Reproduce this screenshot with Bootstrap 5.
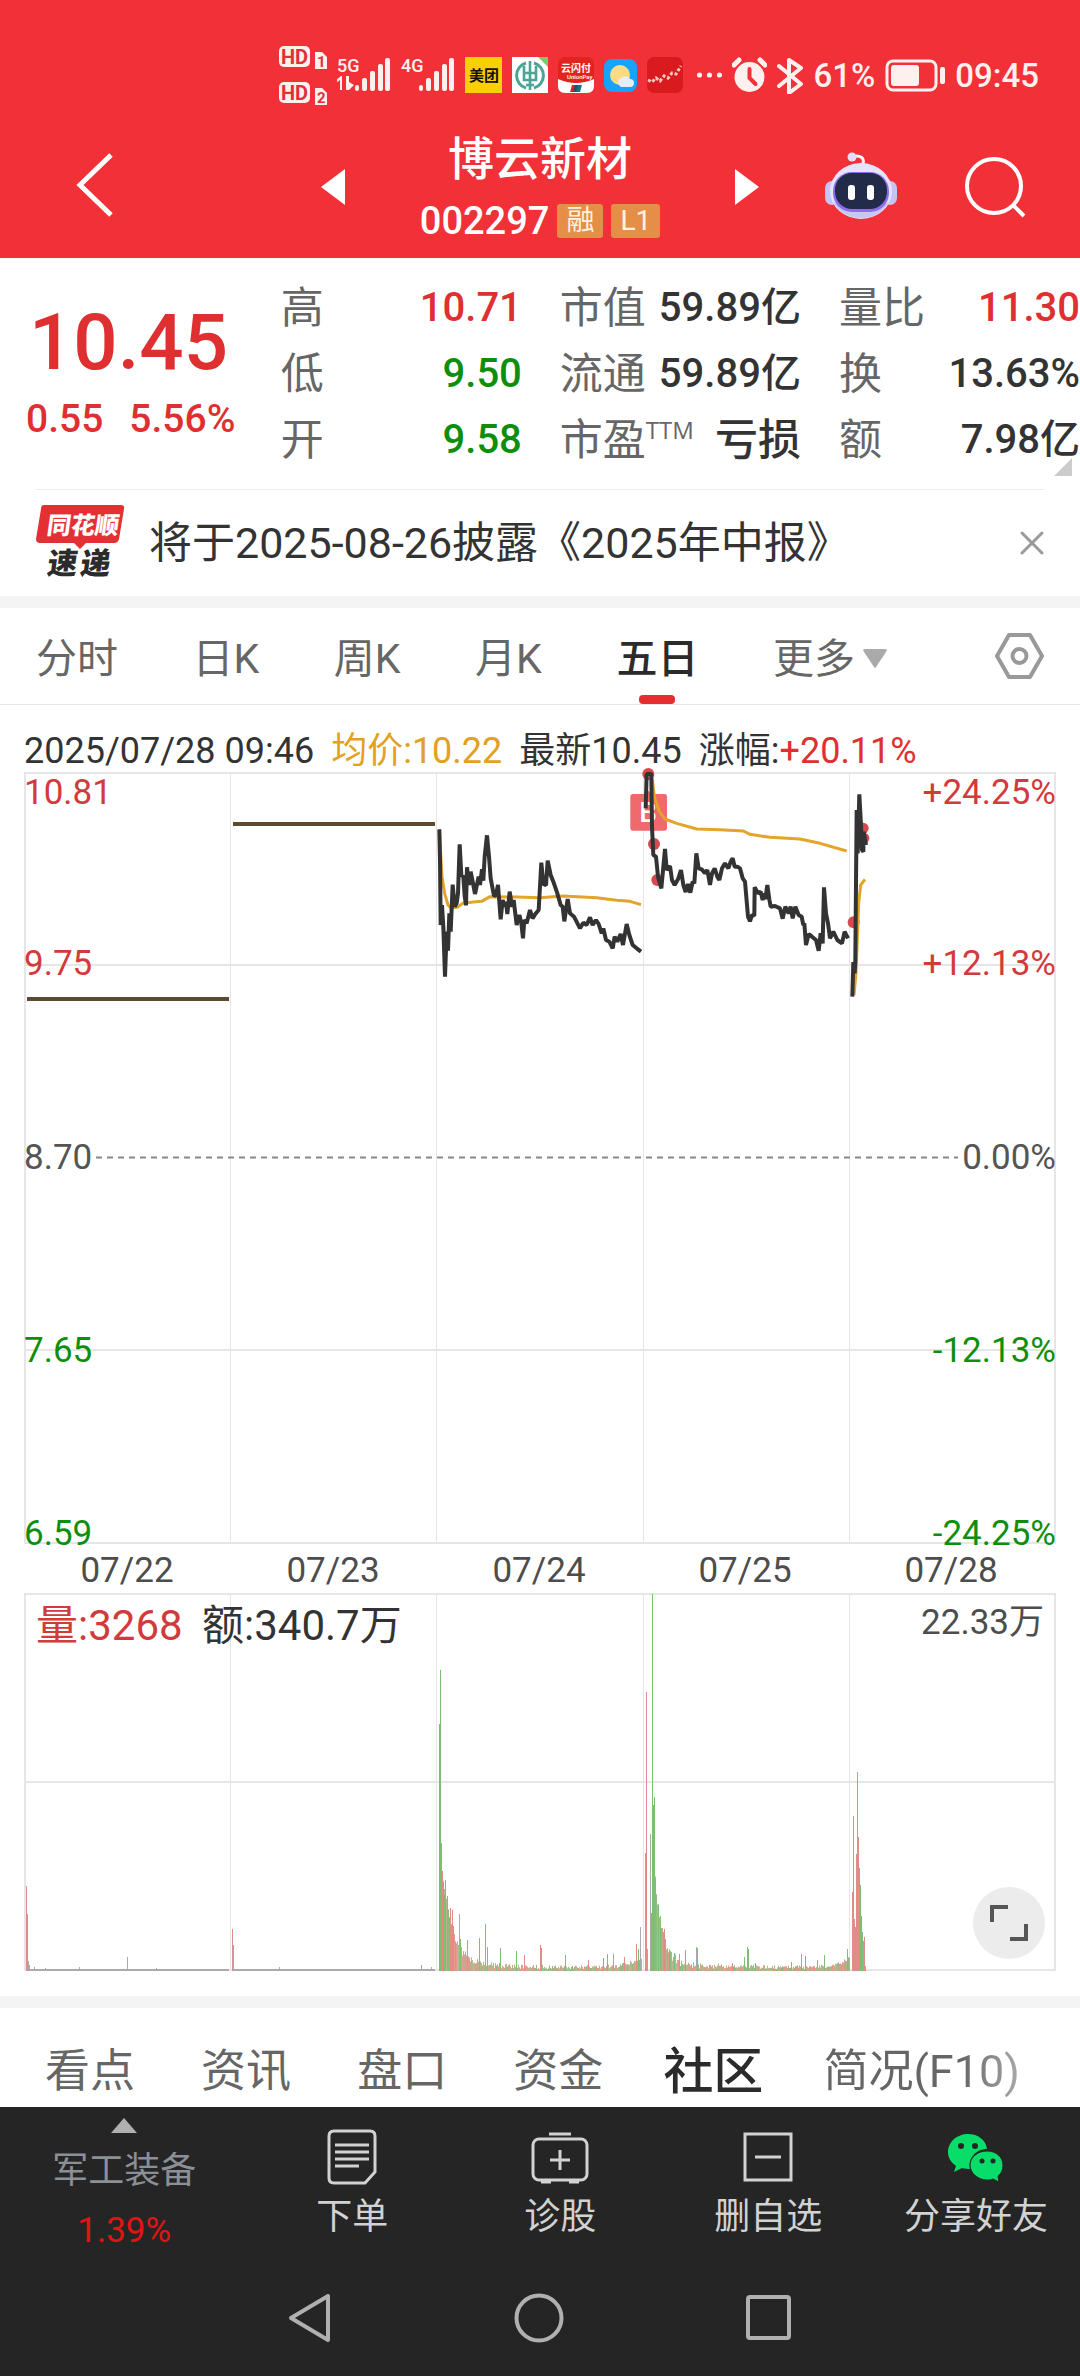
<!DOCTYPE html>
<html lang="zh-CN">
<head>
<meta charset="utf-8">
<meta name="viewport" content="width=device-width, initial-scale=1">
<title>博云新材 002297</title>
<link href="https://cdn.jsdelivr.net/npm/bootstrap@5.3.0/dist/css/bootstrap.min.css" rel="stylesheet">
<style>
  body { font-family: Roboto, "Noto Sans CJK SC", sans-serif; color: #333; background: #fff; }
  a, button { color: inherit; text-decoration: none; }
  button { background: none; border: 0; padding: 0; }
  svg { display: block; flex: none; }
  .up { color: #df3031; }
  .down { color: #0d8f0d; }
  .top-red { background: #f23037; color: #fff; }
  .status-row { height: 116px; padding: 34px 41px 0 0; gap: 10px; font-size: 33px; line-height: 36px; font-weight: 500; color: #fff0f0; }
  .sim-text { font-family: Roboto, sans-serif; font-size: 18px; font-weight: 500; }
  .title-row { height: 142px; padding: 0 54px 0 76px; }
  .stock-name { font-size: 46px; line-height: 60px; font-weight: 500; }
  .stock-code { font-size: 38px; line-height: 48px; font-weight: 500; }
  .tagbox { background: #e58e48; border-radius: 3px; font-size: 28px; line-height: 34px; padding: 0 9px; color: #fff3e0; }
  .title-mid { width: 438px; margin-left: 207px; }
  .quote { height: 231px; padding-top: 17px; }
  .quote-main { width: 26%; padding-left: 26px; }
  .price { font-size: 78px; line-height: 92px; font-weight: 500; padding: 22px 0 3px 3px; }
  .delta { font-size: 39px; line-height: 54px; gap: 26px; font-weight: 500; }
  .quote-cols { gap: 38px; font-size: 43px; line-height: 66px; }
  .quote-cols .lab { color: #666; }
  .quote-cols .val { font-size: 40px; font-weight: 500; white-space: nowrap; }
  .quote-cols .val-text { font-weight: 500; }
  .quote-cols sup { font-size: 24px; top: -16px; font-family: "Open Sans", sans-serif; }
  .corner { position: absolute; right: 8px; bottom: 13px; }
  .notice { height: 107px; margin: 0 36px; border-top: 1px solid #ececec; gap: 24px; font-size: 43px; }
  .band { background: #f4f4f4; height: 12px; }
  .period { height: 97px; padding: 0 36px; border-bottom: 1px solid #e6e6e6; font-size: 41px; color: #666; }
  .period-links { margin-right: 108px; }
  .period-links a { padding-top: 6px; line-height: 90px; position: relative; }
  .period-links .cur { color: #2b2b2b; font-weight: 500; }
  .period-links .cur::after { content: ""; position: absolute; left: 50%; bottom: 0; width: 36px; height: 9px; margin-left: -18px; border-radius: 4px; background: #e62e30; }
  .legend-row { height: 60px; font-size: 36px; line-height: 32px; padding: 30px 24px 0; gap: 17px; }
  .avg { color: #e2a11e; }
  .chart { width: 100%; height: auto; font-size: 35px; }
  .chart .big { font-size: 42px; }
  .vol-wrap { position: relative; }
  .expand { position: absolute; right: 35px; bottom: 37px; width: 72px; height: 72px; border-radius: 50%; background: #ececec; }
  .sections { height: 99px; padding: 28px 60px 0 45px; font-size: 45px; line-height: 68px; color: #666; }
  .sections .cur { font-size: 50px; font-weight: 500; color: #2b2b2b; margin: 0 -6px; }
  .sections .fade-end { background: linear-gradient(90deg, #666 70%, #aaa); -webkit-background-clip: text; background-clip: text; color: transparent; }
  .dark { background: #252525; color: #d2d2d2; }
  .actions { height: 147px; font-size: 36px; line-height: 44px; }
  .sector { flex: none; width: 23%; color: #8a9096; padding-top: 11px; }
  .sector .chg { color: #e01414; line-height: 44px; font-size: 35px; }
  .act { flex: 1 1 0; padding-top: 22px; gap: 10px; }
  .sysnav { height: 122px; padding: 6px 288px 0; }
</style>
<script src="https://cdn.jsdelivr.net/npm/bootstrap@5.3.0/dist/js/bootstrap.bundle.min.js"></script>
</head>
<body>
<header class="top-red">
  <div class="status-row d-flex justify-content-end">
    <svg width="48" height="60" viewBox="0 0 48 60" style="margin-top:12px" font-family="Roboto" font-weight="700">
      <g fill="#fff0f0"><rect width="31" height="21" rx="5"/><path d="M36 6h7l5 5v12H36z"/><rect y="36" width="31" height="21" rx="5"/><path d="M36 42h7l5 5v12H36z"/></g>
      <g fill="#e03038" font-size="20"><text x="2" y="18">HD</text><text x="2" y="54">HD</text><g font-size="15"><text x="38" y="21">1</text><text x="38" y="57">2</text></g></g>
    </svg>
    <svg width="54" height="60" viewBox="0 0 54 60" fill="#fff0f0"><text class="sim-text" x="0" y="38">5G</text>
      <path d="M5 42v14H3V46l-4 3v-3l5-4zM9 42h3v6l5 3-5 5H9z"/><rect x="18" y="51" width="4" height="6" rx="2"/><rect x="25" y="44" width="5" height="13" rx="2"/><rect x="33" y="37" width="5" height="20" rx="2"/><rect x="41" y="30" width="5" height="27" rx="2"/><rect x="48" y="24" width="5" height="33" rx="2"/></svg>
    <svg width="54" height="60" viewBox="0 0 54 60" fill="#fff0f0"><text class="sim-text" x="0" y="38">4G</text>
      <rect x="18" y="51" width="4" height="6" rx="2"/><rect x="25" y="44" width="5" height="13" rx="2"/><rect x="33" y="37" width="5" height="20" rx="2"/><rect x="41" y="30" width="5" height="27" rx="2"/><rect x="48" y="24" width="5" height="33" rx="2"/></svg>
    <svg width="37" height="60" viewBox="0 0 37 60"><rect y="23" width="37" height="36" fill="#fcd000"/><text x="4" y="47" font-size="15" font-weight="700" fill="#111">美团</text></svg>
    <svg width="36" height="60" viewBox="0 0 36 60"><rect y="23" width="36" height="36" fill="#fff"/><path d="M26 23h10v10z" fill="#7cc96a"/><g fill="none" stroke="#4ba596"><path stroke-width="3" d="M14 29a13 13 0 0 0 0 25M22 29a13 13 0 0 1 0 25"/><path stroke-width="2.600" d="M18 27v29M12 32v14h12V32M12 39h12M14 51h8"/></g></svg>
    <svg width="36" height="60" viewBox="0 0 36 60"><rect y="23" width="36" height="36" rx="7" fill="#e3231e"/><path d="M0 45q18 8 36 0v7q0 7-7 7H7q-7 0-7-7z" fill="#fff"/><text x="3" y="38" font-size="10" font-weight="700" fill="#fff">云闪付</text><path d="M14 51h5l-2 7h-5z" fill="#d22"/><path d="M17 51h4l-2 7h-4z" fill="#234a83"/><path d="M20 51h4l-2 7h-4z" fill="#177"/><text x="9" y="45" font-size="6" fill="#fff">UnionPay</text></svg>
    <svg width="33" height="60" viewBox="0 0 33 60"><rect y="25" width="33" height="33" rx="8" fill="#17a2fb"/><circle cx="16" cy="41" r="10" fill="#ffdc84"/><path d="M17 53a5 5 0 0 1 0-9 6 6 0 0 1 9 1 4 4 0 0 1 0 8z" fill="#e8eef8"/></svg>
    <svg width="36" height="60" viewBox="0 0 36 60"><rect y="23" width="36" height="36" rx="7" fill="#d91a1f"/><path d="M1 46l4 2 4-4 4 3 4-5 4 2 4-5 4 1 5-8" fill="none" stroke="#ffc9c0" stroke-width="3" stroke-dasharray="3 2"/></svg>
    <svg class="ms-1" width="25" height="60" viewBox="0 0 25 60" fill="#fff0f0"><circle cx="2.500" cy="41" r="2.600"/><circle cx="12.500" cy="41" r="2.600"/><circle cx="22.500" cy="41" r="2.600"/></svg>
    <svg width="35" height="60" viewBox="0 0 35 60"><circle cx="17.500" cy="43" r="15" fill="#fff0f0"/><path d="M2 31l5-5M33 31l-5-5" stroke="#fff0f0" stroke-width="5" stroke-linecap="round"/><path d="M17.500 35v9l6 6" stroke="#f23037" stroke-width="4" fill="none" stroke-linecap="round"/></svg>
    <svg width="26" height="60" viewBox="0 0 26 60"><path d="M2 32l22 18-12 9V26l12 8L2 52" fill="none" stroke="#fff0f0" stroke-width="4" stroke-linejoin="round" stroke-linecap="round"/></svg>
    <span class="mt-4">61%</span>
    <svg width="60" height="60" viewBox="0 0 60 60"><rect x="2" y="27" width="49" height="29" rx="6" fill="none" stroke="#fff0f0" stroke-width="3"/><rect x="6" y="31" width="28" height="21" rx="3" fill="#fff0f0"/><rect x="55" y="33" width="5" height="17" rx="2" fill="#fff0f0"/></svg>
    <span class="mt-4">09:45</span>
  </div>
  <div class="title-row d-flex align-items-center">
    <button type="button" aria-label="返回"><svg width="38" height="68" viewBox="0 0 38 68" fill="none" stroke="#fff" stroke-width="5"><path d="M35 2L4 32l31 30"/></svg></button>
    <div class="title-mid d-flex align-items-center justify-content-between">
      <button type="button" aria-label="上一只"><svg width="24" height="36" viewBox="0 0 24 36"><path d="M24 0v36L0 18z" fill="#fff"/></svg></button>
      <div class="text-center">
        <div class="stock-name">博云新材</div>
        <div class="d-flex align-items-center justify-content-center gap-2 pt-2"><span class="stock-code">002297</span><span class="tagbox">融</span><span class="tagbox">L1</span></div>
      </div>
      <button type="button" aria-label="下一只"><svg width="24" height="36" viewBox="0 0 24 36"><path d="M0 0v36l24-18z" fill="#fff"/></svg></button>
    </div>
    <div class="d-flex align-items-center ms-auto" style="gap:68px">
      <button type="button" aria-label="智能助手"><svg width="72" height="70" viewBox="0 0 72 70"><path d="M38 12q2-8-7-8" fill="none" stroke="#fff" stroke-width="3"/><circle cx="27" cy="5" r="4.500" fill="#e4defa"/><rect x="0" y="29" width="14" height="24" rx="7" fill="#c5c4f4"/><rect x="58" y="29" width="14" height="24" rx="7" fill="#c5c4f4"/><ellipse cx="36" cy="39" rx="31" ry="28" fill="#e6e4fc"/><path d="M8 50a31 28 0 0 0 56 0q-28 14-56 0z" fill="#c8c7f4"/><rect x="8" y="20" width="56" height="40" rx="19" fill="#8d6cf0"/><rect x="10" y="21" width="52" height="36" rx="17" fill="#222c48"/><rect x="23" y="33" width="7" height="15" rx="3" fill="#fff"/><rect x="42" y="33" width="7" height="15" rx="3" fill="#fff"/></svg></button>
      <button type="button" aria-label="搜索"><svg width="61" height="61" viewBox="0 0 61 61" fill="none" stroke="#fff" stroke-width="4"><circle cx="29" cy="29" r="27"/><path d="M48 48l11 11"/></svg></button>
    </div>
  </div>
</header>

<section class="quote d-flex position-relative">
  <div class="quote-main up">
    <div class="price">10.45</div>
    <div class="delta d-flex"><span>0.55</span><span>5.56%</span></div>
  </div>
  <div class="quote-cols d-flex flex-grow-1">
    <div class="flex-fill w-100">
      <div class="d-flex justify-content-between"><span class="lab">高</span><span class="val up">10.71</span></div>
      <div class="d-flex justify-content-between"><span class="lab">低</span><span class="val down">9.50</span></div>
      <div class="d-flex justify-content-between"><span class="lab">开</span><span class="val down">9.58</span></div>
    </div>
    <div class="flex-fill w-100">
      <div class="d-flex justify-content-between"><span class="lab">市值</span><span class="val">59.89亿</span></div>
      <div class="d-flex justify-content-between"><span class="lab">流通</span><span class="val">59.89亿</span></div>
      <div class="d-flex justify-content-between"><span class="lab">市盈<sup>TTM</sup></span><span class="val-text">亏损</span></div>
    </div>
    <div class="flex-fill w-100">
      <div class="d-flex justify-content-between"><span class="lab">量比</span><span class="val up">11.30</span></div>
      <div class="d-flex justify-content-between"><span class="lab">换</span><span class="val">13.63%</span></div>
      <div class="d-flex justify-content-between"><span class="lab">额</span><span class="val">7.98亿</span></div>
    </div>
  </div>
  <svg class="corner" width="18" height="18" viewBox="0 0 18 18"><path d="M18 0v18H0z" fill="#ccc"/></svg>
</section>

<section class="notice d-flex align-items-center">
  <svg width="89" height="84" viewBox="0 -4 89 84" font-weight="900"><path d="M8 0h77q4 0 3 4l-5 30q-1 4-5 4H50l-6 6-6-6H4q-4 0-4-4L5 4q0-4 3-4z" fill="#e43033"/><g transform="skewX(-8)"><text x="14" y="29" font-size="24" fill="#fff">同花顺</text><text x="20" y="69" font-size="30" fill="#2b2b2b">速</text><text x="53" y="69" font-size="30" fill="#2b2b2b">递</text></g></svg>
  <span class="flex-grow-1 text-nowrap">将于2025-08-26披露《2025年中报》</span>
  <button type="button" aria-label="关闭"><svg width="24" height="24" viewBox="0 0 24 24" stroke="#999" stroke-width="3" stroke-linecap="round"><path d="M2 2l20 20M22 2L2 22"/></svg></button>
</section>
<div class="band"></div>

<nav class="period d-flex align-items-center">
  <div class="period-links d-flex justify-content-between flex-grow-1">
    <a href="#">分时</a><a href="#">日K</a><a href="#">周K</a><a href="#">月K</a><a href="#" class="cur">五日</a>
    <a href="#" class="d-flex align-items-center gap-2">更多<svg width="24" height="20" viewBox="0 0 24 20"><path d="M2 0h20q3 0 1 3L13 18q-1 2-2 0L1 3Q-1 0 2 0z" fill="#aaa"/></svg></a>
  </div>
  <button type="button" aria-label="设置"><svg width="49" height="46" viewBox="0 0 49 46" fill="none" stroke="#999" stroke-width="4" stroke-linejoin="round"><path d="M14 2h21l12 21-12 21H14L2 23z"/><circle cx="24.500" cy="23" r="7"/></svg></button>
</nav>

<div class="legend-row d-flex text-nowrap"><span>2025/07/28 09:46</span><span class="avg">均价:10.22</span><span>最新10.45</span><span>涨幅:<span class="up">+20.11%</span></span></div>

<svg class="chart" viewBox="0 0 1080 826" role="img" aria-label="五日分时走势">
  <g fill="none" stroke="#e6e6e6" stroke-width="2"><path d="M25 8H1055V778H25zM25 200H1055M25 585H1055"/><path stroke-width="1" d="M230.500 8V778M436.500 8V778M643.500 8V778M849.500 8V778"/></g>
  <path d="M96 392.500H958" stroke="#888" stroke-width="2" stroke-dasharray="6 5"/>
  <g stroke="#5b4c30" stroke-width="4"><path d="M27 234H229M233 59H435"/></g>
  <g transform="translate(420 -5) scale(.33333)">
    <path d="M685 92l10 12h-20zM639 102h94q8 0 8 8v94q0 8-8 8h-94q-8 0-8-8v-94q0-8 8-8z" fill="#ef6a6c"/>
    <text x="658" y="187" font-size="84" font-weight="500" fill="#fff">B</text>
    <g fill="#d9484c"><circle cx="685" cy="42" r="18"/><circle cx="702" cy="252" r="18"/><circle cx="712" cy="360" r="18"/><circle cx="1329" cy="205" r="17"/><circle cx="1331" cy="235" r="17"/><circle cx="1301" cy="487" r="18"/></g>
    <g fill="none" stroke="#e2a52a" stroke-width="9" stroke-linejoin="round"><path d="M58 208L66 350 74 400 84 435 92 443 112 442 128 430 160 426 185 424 210 410 290 411 360 413 430 408 530 413 590 421 630 424 663 434"/><path d="M686 45L697 60 703 110 718 155 735 177 770 190 830 207 900 209 970 213 990 223 1050 232 1140 237 1200 250 1280 273"/><path d="M1302 705L1308 640 1316 430 1322 375 1335 358"/></g>
    <g fill="none" stroke="#333" stroke-width="12" stroke-linejoin="bevel"><path d="M58 208L60 300 62 495 66 435 70 500 75 650 80 515 84 572 88 460 92 515 98 374 104 440 110 430 114 400 119 253 124 345 130 350 134 408 138 436 141 322 147 375 152 335 158 365 165 402 170 378 176 350 180 375 186 328 190 362 194 290 201 226 207 290 212 355 222 408 228 405 234 375 242 478 248 420 254 440 258 425 262 462 269 395 276 440 281 420 290 495 298 465 304 490 309 535 313 480 320 490 330 450 338 475 346 462 356 450 364 308 370 372 378 376 383 302 392 345 400 365 412 400 422 435 428 440 433 484 443 417 450 460 462 470 480 505 490 488 500 495 510 472 518 495 528 480 536 492 545 520 550 505 558 540 568 545 578 565 584 530 592 545 602 522 609 555 620 492 628 525 638 555 650 565 663 575"/>
    <path d="M677 145L680 42 694 42 696 200 700 285 708 290 714 350 724 385 735 267 740 330 750 318 756 360 764 375 774 358 783 330 790 375 797 396 804 372 811 398 818 365 823 370 829 280 836 325 845 328 855 340 862 330 870 375 876 340 884 325 892 350 898 360 906 325 915 310 925 325 932 305 938 295 944 320 952 320 960 325 968 355 975 365 984 470 990 484 996 465 1003 467 1004 382 1014 400 1022 395 1028 420 1034 400 1036 418 1042 375 1048 418 1052 440 1065 438 1080 445 1088 476 1096 440 1106 460 1112 440 1118 475 1126 440 1136 465 1145 470 1150 495 1153 490 1158 555 1166 522 1176 530 1188 540 1196 572 1202 520 1208 550 1212 382 1218 460 1224 490 1230 535 1240 515 1252 540 1266 550 1274 515 1284 535"/>
    <path d="M1297 710L1300 606 1304 640 1306 600 1310 150 1313 280 1318 103 1323 195 1326 270 1330 275 1331 215 1338 255"/></g>
  </g>
  <g fill="#d23a3c"><text x="24" y="39">10.81</text><text x="24" y="210">9.75</text><g text-anchor="end"><text x="1056" y="39">+24.25%</text><text x="1056" y="210">+12.13%</text></g></g>
  <g fill="#555"><text x="24" y="404">8.70</text><text x="1056" y="404" text-anchor="end">0.00%</text></g>
  <g fill="#0d8f0d"><text x="24" y="597">7.65</text><text x="24" y="780">6.59</text><g text-anchor="end"><text x="1056" y="597">-12.13%</text><text x="1056" y="780">-24.25%</text></g></g>
  <g fill="#4d4d4d" text-anchor="middle"><text x="127" y="817">07/22</text><text x="333" y="817">07/23</text><text x="539" y="817">07/24</text><text x="745" y="817">07/25</text><text x="951" y="817">07/28</text></g>
</svg>

<div class="vol-wrap">
  <svg class="chart" viewBox="0 0 1080 405" role="img" aria-label="成交量">
    <g fill="none" stroke="#e6e6e6" stroke-width="2"><path d="M25 3H1055V379H25zM25 191H1055"/><path stroke-width="1" d="M230.500 3V379M436.500 3V379M643.500 3V379M849.500 3V379"/></g>
    <g id="bars"></g>
    <text class="big" x="36" y="49" fill="#d23a3c">量:3268</text><text class="big" x="202" y="49" fill="#333">额:340.7万</text>
    <text x="1044" y="43" fill="#4d4d4d" text-anchor="end">22.33万</text>
  </svg>
  <button type="button" class="expand d-flex align-items-center justify-content-center" aria-label="全屏"><svg width="38" height="38" viewBox="0 0 38 38" fill="none" stroke="#555" stroke-width="4"><path d="M2 18V3h16M36 20v15H20"/></svg></button>
</div>
<div class="band"></div>

<nav class="sections d-flex align-items-center justify-content-between text-nowrap">
  <a href="#">看点</a><a href="#">资讯</a><a href="#">盘口</a><a href="#">资金</a><a href="#" class="cur">社区</a><a href="#" class="fade-end">简况(F10)</a>
</nav>

<footer class="dark">
  <div class="actions d-flex text-center">
    <a href="#" class="sector d-flex flex-column align-items-center"><svg width="26" height="15" viewBox="0 0 26 15"><path d="M13 0l13 15H0z" fill="#b0b0b0"/></svg><span class="pt-3">军工装备</span><span class="chg pt-3">1.39%</span></a>
    <a href="#" class="act d-flex flex-column align-items-center"><svg width="50" height="56" viewBox="0 0 50 56" fill="none" stroke="#d2d2d2" stroke-width="3"><path d="M7 2h36q5 0 5 5v36L38 54H7q-5 0-5-5V7q0-5 5-5z"/><path d="M8 16h34M8 23h34M8 30h34M8 37h24"/></svg><span>下单</span></a>
    <a href="#" class="act d-flex flex-column align-items-center"><svg width="58" height="56" viewBox="0 0 58 56" fill="none" stroke="#d2d2d2" stroke-width="3"><path d="M18 5h22M10 53h10M38 53h10"/><rect x="2" y="10" width="54" height="41" rx="6"/><path d="M29 21v20M19 31h20"/></svg><span>诊股</span></a>
    <a href="#" class="act d-flex flex-column align-items-center"><svg width="50" height="56" viewBox="0 0 50 56" fill="none" stroke="#d2d2d2" stroke-width="3"><rect x="2" y="5" width="46" height="46"/><path d="M12 28h26"/></svg><span>删自选</span></a>
    <a href="#" class="act d-flex flex-column align-items-center"><svg width="56" height="56" viewBox="0 0 56 56"><path d="M20 5C9 5 0 13 0 23c0 6 3 10 8 14l-2 6 8-4q4 1 8 1c-2-11 6-20 17-20C38 11 30 5 20 5z" fill="#07dd68"/><path d="M39 22c-9 0-17 6-17 14s8 15 17 15q4 0 6-1l6 3-1-6c3-2 5-6 5-11 0-8-7-14-16-14z" fill="#07dd68" stroke="#252525" stroke-width="1"/><g fill="#252525"><circle cx="13" cy="17" r="3"/><circle cx="27" cy="17" r="3"/><circle cx="34" cy="32" r="2.500"/><circle cx="45" cy="32" r="2.500"/></g></svg><span>分享好友</span></a>
  </div>
  <div class="sysnav d-flex align-items-center justify-content-between">
    <button type="button" aria-label="后退"><svg width="44" height="50" viewBox="0 0 44 50" fill="none" stroke="#b0b0b0" stroke-width="4" stroke-linejoin="round"><path d="M40 3v44L3 25z"/></svg></button>
    <button type="button" aria-label="主页"><svg width="50" height="50" viewBox="0 0 50 50" fill="none" stroke="#b0b0b0" stroke-width="4"><circle cx="25" cy="25" r="22.500"/></svg></button>
    <button type="button" aria-label="最近任务"><svg width="46" height="46" viewBox="0 0 46 46" fill="none" stroke="#b0b0b0" stroke-width="4"><rect x="2" y="2" width="41" height="41" rx="2"/></svg></button>
  </div>
</footer>
<script>
  // Volume bars: [x, height, colour]; r = rise, g = fall, n = flat
  const tone = { r: '#e08c88', g: '#7fbc74', n: '#a9a9a9' };
  const peaks = [
    [26,85,'r'],[27,57,'r'],[28,10,'n'],[29,6,'n'],[34,4,'n'],[45,3,'n'],[79,4,'n'],[127,14,'n'],[156,3,'n'],
    [232,42,'r'],[233,26,'n'],[279,4,'n'],[421,6,'n'],[431,4,'n'],
    [439,247,'g'],[440,301,'g'],[441,128,'g'],[442,100,'r'],[443,88,'g'],[444,76,'g'],[445,91,'g'],[447,75,'r'],[450,63,'r'],[452,61,'r'],[453,45,'r'],[459,57,'n'],[460,32,'g'],[467,31,'r'],[479,33,'r'],[485,47,'r'],[487,24,'r'],[500,23,'g'],[516,20,'g'],[524,16,'r'],[540,26,'r'],[541,23,'r'],[565,16,'r'],[588,11,'r'],[603,13,'g'],[607,17,'g'],[613,17,'r'],[624,14,'r'],[636,27,'r'],[638,22,'g'],[640,44,'n'],
    [645,118,'r'],[646,279,'r'],[647,22,'n'],[650,137,'n'],[651,58,'g'],[652,377,'g'],[653,166,'g'],[654,174,'g'],[655,92,'r'],[658,65,'g'],[660,48,'g'],[664,42,'r'],[665,32,'r'],[669,20,'g'],[674,18,'g'],[679,17,'r'],[685,21,'g'],[696,24,'n'],[697,23,'g'],[732,8,'r'],[744,14,'g'],[747,24,'g'],[748,22,'g'],[755,8,'g'],[791,9,'g'],[801,17,'g'],[805,15,'g'],[817,11,'r'],[824,16,'g'],[847,22,'g'],
    [852,79,'r'],[853,155,'r'],[854,52,'r'],[855,44,'r'],[856,117,'r'],[857,199,'r'],[858,134,'r'],[859,103,'g'],[860,86,'g'],[861,55,'g'],[862,39,'g'],[863,30,'r'],[864,34,'r'],[865,5,'r']
  ];
  // Background turnover between the peaks: [from, to, first height, decay, floor, rise at close]
  const spans = [[28,229,2,1,2,0],[234,435,2,1,2,0],[441,642,95,.1,4,14],[654,850,95,.14,4,12]];
  let seed = 7;
  const rnd = () => (seed = (seed * 16807) % 2147483647) / 2147483647;
  const put = (x, h, c) => '<rect x="' + x + '" y="' + (380 - h).toFixed(1) + '" width="1" height="' + h.toFixed(1) + '" fill="' + c + '"/>';
  let out = '';
  spans.forEach((s, k) => {
    for (let x = s[0]; x < s[1]; x++) {
      const t = x - s[0], left = s[1] - x;
      let h = k < 2 ? 2 : s[2] * Math.exp(-s[3] * t) + 12 * Math.exp(-.025 * t) * rnd() + s[4] * (.4 + rnd()) + s[5] * Math.exp(-left / 12) * (.6 + rnd() * .4);
      out += put(x, h, k < 2 ? '#ababab' : ['#e39a94', '#8cbd7c', '#b5b98d', '#c8a888'][Math.floor(rnd() * 4)]);
    }
  });
  peaks.forEach(p => out += put(p[0], p[1], tone[p[2]]));
  document.getElementById('bars').innerHTML = out;
</script>
</body>
</html>
